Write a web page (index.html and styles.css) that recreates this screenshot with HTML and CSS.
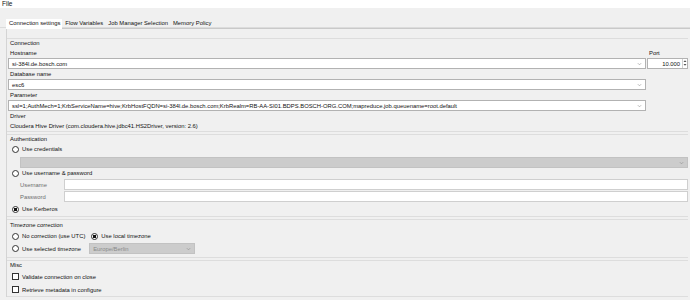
FILE: index.html
```html
<!DOCTYPE html>
<html lang="en">
<head>
    <meta charset="UTF-8">
    <title>Connection settings</title>
    <link rel="stylesheet" href="styles.css">
</head>
<body>
    <div class="menubar">File</div>
    <div class="tabbar">
        <div class="tab tab-active">Connection settings</div>
        <div class="tab">Flow Variables</div>
        <div class="tab">Job Manager Selection</div>
        <div class="tab">Memory Policy</div>
    </div>

    <div class="panel">
        <!-- Connection -->
        <div class="section sec-connection">
            <div class="section-title">Connection</div>
            <div class="field-row">
                <div class="field grow">
                    <div class="label">Hostname</div>
                    <div class="combo">
                        <span class="value">si-384l.de.bosch.com</span>
                        <svg class="arrow" viewBox="0 0 6 4"><path d="M1 1 L3 3 L5 1" /></svg>
                    </div>
                </div>
                <div class="field port">
                    <div class="label">Port</div>
                    <div class="spin">
                        <span class="value">10.000</span>
                        <div class="spin-btns">
                            <svg viewBox="0 0 4 3"><path d="M0.5 2.5 L2 0.8 L3.5 2.5 Z" /></svg>
                            <svg viewBox="0 0 4 3"><path d="M0.5 0.5 L2 2.2 L3.5 0.5 Z" /></svg>
                        </div>
                    </div>
                </div>
            </div>
            <div class="field-row">
                <div class="field grow">
                    <div class="label">Database name</div>
                    <div class="combo">
                        <span class="value">esc6</span>
                        <svg class="arrow" viewBox="0 0 6 4"><path d="M1 1 L3 3 L5 1" /></svg>
                    </div>
                </div>
                <div class="field port"></div>
            </div>
            <div class="field-row">
                <div class="field grow">
                    <div class="label">Parameter</div>
                    <div class="combo">
                        <span class="value">ssl=1;AuthMech=1;KrbServiceName=hive;KrbHostFQDN=si-384l.de.bosch.com;KrbRealm=RB-AA-SI01.BDPS.BOSCH-ORG.COM;mapreduce.job.queuename=root.default</span>
                        <svg class="arrow" viewBox="0 0 6 4"><path d="M1 1 L3 3 L5 1" /></svg>
                    </div>
                </div>
                <div class="field port"></div>
            </div>
            <div class="label">Driver</div>
            <div class="label">Cloudera Hive Driver (com.cloudera.hive.jdbc41.HS2Driver, version: 2.6)</div>
        </div>

        <!-- Authentication -->
        <div class="section sec-auth">
            <div class="section-title">Authentication</div>
            <div class="option"><span class="radio"></span>Use credentials</div>
            <div class="combo combo-disabled indent">
                <span class="value"></span>
                <svg class="arrow" viewBox="0 0 6 4"><path d="M1 1 L3 3 L5 1" /></svg>
            </div>
            <div class="option"><span class="radio"></span>Use username &amp; password</div>
            <div class="cred-row">
                <span class="cred-label">Username</span>
                <div class="text-input"></div>
            </div>
            <div class="cred-row">
                <span class="cred-label">Password</span>
                <div class="text-input"></div>
            </div>
            <div class="option option-last"><span class="radio radio-on"></span>Use Kerberos</div>
        </div>

        <!-- Timezone correction -->
        <div class="section sec-timezone">
            <div class="section-title">Timezone correction</div>
            <div class="option tz-first">
                <span class="radio"></span>No correction (use UTC)
                <span class="radio radio-on radio-next"></span>Use local timezone
            </div>
            <div class="option tz-row">
                <span class="radio"></span>Use selected timezone
                <div class="combo combo-disabled tz-combo">
                    <span class="value">Europe/Berlin</span>
                    <svg class="arrow" viewBox="0 0 6 4"><path d="M1 1 L3 3 L5 1" /></svg>
                </div>
            </div>
        </div>

        <!-- Misc -->
        <div class="section sec-misc">
            <div class="section-title">Misc</div>
            <div class="option check-row"><span class="checkbox"></span>Validate connection on close</div>
            <div class="option check-row"><span class="checkbox"></span>Retrieve metadata in configure</div>
        </div>
    </div>
</body>
</html>
```

FILE: styles.css
```css
* {
    box-sizing: border-box;
}
body {
    margin: 0;
    width: 690px;
    height: 300px;
    overflow: hidden;
    background-color: #f0f0f0;
    color: #111111;
    font-family: "Liberation Sans", Arial, sans-serif;
    font-size: 5.85px;
}
.menubar {
    height: 8px;
    line-height: 7px;
    padding-left: 2px;
    font-size: 6.5px;
    background-color: #ffffff;
}
.tabbar {
    display: flex;
    height: 20px;
    padding: 11px 0 0 6px;
    border-bottom: 1px solid #dcdcdc;
}
.tab {
    height: 9px;
    line-height: 9px;
    padding: 0 2px 0 3px;
    white-space: nowrap;
}
.tab-active {
    height: 10px;
    background-color: #ffffff;
}
.panel {
    margin-left: 6px;
    padding: 9px 2px 0 0;
    border-top: 1px solid #c9c9c9;
    border-left: 1px solid #d4d4d4;
}
.section {
    padding: 0 0 0 1px;
    border-top: 1px solid #dddddd;
    border-bottom: 1px solid #dddddd;
    margin-bottom: 2px;
}
.section-title, .label {
    height: 10px;
    line-height: 10px;
    padding-left: 2px;
    white-space: nowrap;
}
.section-title {
    height: 9px;
    line-height: 9px;
}
.field-row {
    display: flex;
    gap: 1px;
}
.field.grow {
    flex: 1;
}
.field.port {
    width: 41px;
}
.sec-connection .field-row:first-of-type .label {
    height: 9px;
}
.combo, .spin, .text-input {
    display: flex;
    align-items: center;
    height: 11px;
    padding: 0 2px;
    background-color: #ffffff;
    border: 1px solid #b2b2b2;
    white-space: nowrap;
    overflow: hidden;
}
.combo .value {
    flex: 1;
    padding-left: 1px;
}
.arrow {
    width: 5px;
    height: 4px;
    margin-right: 1px;
    fill: none;
    stroke: #8c8c8c;
    stroke-width: 0.7;
}
.spin {
    padding-right: 0;
}
.spin .value {
    flex: 1;
    text-align: right;
    padding-right: 2px;
}
.spin-btns {
    display: flex;
    flex-direction: column;
    width: 5px;
    height: 9px;
    border-left: 1px solid #d0d0d0;
}
.spin-btns svg {
    width: 4px;
    height: 4px;
    fill: #505050;
}
.combo-disabled {
    background-color: #cccccc;
    border-color: #c2c2c2;
    color: #8a8a8a;
}
.combo.indent {
    margin: 3px 0 0 12px;
}
.option {
    display: flex;
    align-items: center;
    height: 10px;
    padding-left: 4px;
    white-space: nowrap;
}
.radio {
    width: 7px;
    height: 7px;
    margin-right: 3px;
    border: 1px solid #333333;
    border-radius: 50%;
    background-color: #ffffff;
    flex-shrink: 0;
}
.radio-on {
    background: radial-gradient(circle, #111111 0 1.7px, #ffffff 2px);
}
.radio-next {
    margin-left: 6px;
}
.cred-row {
    display: flex;
    align-items: center;
    height: 11px;
    margin-top: 1px;
    padding-left: 12px;
}
.cred-row:first-of-type {
    margin-top: 6px;
}
.cred-label {
    width: 44px;
    color: #6e6e6e;
}
.text-input {
    flex: 1;
    border-color: #cfcfcf;
}
.option-last {
    margin: 2px 0 2px;
}
.sec-timezone .section-title {
    margin-top: 1px;
}
.tz-first {
    margin-top: 1px;
}
.tz-row {
    height: 15px;
    margin-bottom: 1px;
}
.tz-combo {
    width: 106px;
    margin-left: 8px;
}
.check-row {
    height: 13px;
}
.checkbox {
    width: 7px;
    height: 7px;
    margin-right: 3px;
    border: 1px solid #333333;
    background-color: #ffffff;
}
```
